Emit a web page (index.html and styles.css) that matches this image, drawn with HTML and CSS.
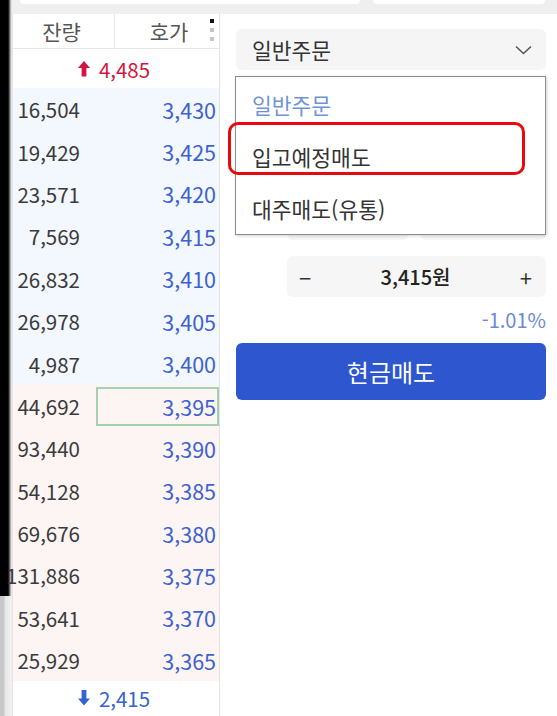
FILE: index.html
```html
<!DOCTYPE html>
<html lang="ko">
<head>
<meta charset="utf-8">
<title>호가 주문</title>
<link rel="stylesheet" href="styles.css">
</head>
<body>
<div class="screen">
  <div class="edge"><div class="edge-dark"></div><div class="edge-light"></div></div>
  <div class="main">
    <div class="topband"><div class="tb-box tb-a"></div><div class="tb-box tb-b"></div></div>
    <div class="content">
      <section class="book">
        <div class="book-head">
          <div class="hcell hcell-qty">잔량</div>
          <div class="hcell hcell-price">호가
            <span class="kebab"><i class="dot on"></i><i class="dot"></i><i class="dot"></i></span>
          </div>
        </div>
        <div class="total total-up">
          <svg class="arr" width="12" height="16" viewBox="0 0 12 16"><polygon points="6,0 12,7 8.4,7 8.4,15.5 3.6,15.5 3.6,7 0,7" fill="currentColor"/></svg>
          <span>4,485</span>
        </div>
        <div class="rows">
          <div class="row sell"><span class="qty">16,504</span><span class="price">3,430</span></div>
          <div class="row sell"><span class="qty">19,429</span><span class="price">3,425</span></div>
          <div class="row sell"><span class="qty">23,571</span><span class="price">3,420</span></div>
          <div class="row sell"><span class="qty">7,569</span><span class="price">3,415</span></div>
          <div class="row sell"><span class="qty">26,832</span><span class="price">3,410</span></div>
          <div class="row sell"><span class="qty">26,978</span><span class="price">3,405</span></div>
          <div class="row sell"><span class="qty">4,987</span><span class="price">3,400</span></div>
          <div class="row buy"><span class="qty">44,692</span><span class="price sel">3,395</span></div>
          <div class="row buy"><span class="qty">93,440</span><span class="price">3,390</span></div>
          <div class="row buy"><span class="qty">54,128</span><span class="price">3,385</span></div>
          <div class="row buy"><span class="qty">69,676</span><span class="price">3,380</span></div>
          <div class="row buy"><span class="qty">131,886</span><span class="price">3,375</span></div>
          <div class="row buy"><span class="qty">53,641</span><span class="price">3,370</span></div>
          <div class="row buy"><span class="qty">25,929</span><span class="price">3,365</span></div>
        </div>
        <div class="total total-down">
          <svg class="arr" width="12" height="16" viewBox="0 0 12 16"><polygon points="6,15.5 12,8.5 8.4,8.5 8.4,0 3.6,0 3.6,8.5 0,8.5" fill="currentColor"/></svg>
          <span>2,415</span>
        </div>
      </section>
      <section class="order">
        <div class="select-wrap">
          <div class="select">
            <span>일반주문</span>
            <svg class="chev" width="17" height="10" viewBox="0 0 17 10"><polyline points="1,1.5 8.5,8.5 16,1.5" fill="none" stroke="#555" stroke-width="1.6"/></svg>
          </div>
          <ul class="menu">
            <li class="opt opt-on">일반주문</li>
            <li class="opt">입고예정매도</li>
            <li class="opt">대주매도(유통)</li>
            <li class="mark"></li>
          </ul>
        </div>
        <div class="fields">
          <div class="pair"><div class="box"></div><div class="box"></div></div>
          <div class="pair"><div class="box"></div><div class="box"></div></div>
          <div class="pair"><div class="box"></div><div class="box"></div></div>
          <div class="stepper"><span class="step">−</span><span class="val">3,415원</span><span class="step">+</span></div>
        </div>
        <div class="rate">-1.01%</div>
        <button class="submit">현금매도</button>
      </section>
    </div>
  </div>
</div>
</body>
</html>
```
FILE: styles.css
```css
* { box-sizing: border-box; }
html, body { margin: 0; padding: 0; }
body {
  width: 557px;
  height: 716px;
  overflow: hidden;
  background: #fff;
  font-family: "Noto Sans CJK KR", "Noto Sans", sans-serif;
  color: #333;
}
.screen { display: flex; height: 716px; }
.edge { width: 12px; display: flex; flex-direction: column; }
.edge-dark {
  height: 596px;
  background: linear-gradient(to right, #000 0, #000 8px, #3a3a3a 9px, #8a8a8a 10px, #d8d8d8 11px, #ececec 12px);
}
.edge-light {
  flex: 1;
  background: linear-gradient(to right, #c8c8c8 0, #c8c8c8 4px, #e6e6e6 5px, #f2f2f2 11px, #e8e8e8 12px);
}
.main { flex: 1; display: flex; flex-direction: column; min-width: 0; }
.topband {
  height: 14px;
  background: #efefef;
  display: flex;
  gap: 13px;
  padding: 0 12px 0 8px;
}
.tb-box { height: 4px; background: #fff; border-radius: 0 0 5px 5px; }
.tb-a { width: 340px; }
.tb-b { flex: 1; }
.content { flex: 1; display: flex; }

/* order book */
.book {
  width: 208px;
  border-left: 1px solid #e6e6e6;
  border-right: 1px solid #e2e2e2;
  display: flex;
  flex-direction: column;
}
.book-head {
  height: 35px;
  display: grid;
  grid-template-columns: 102px 1fr;
  border-bottom: 1px solid #e6e6e6;
}
.hcell {
  display: flex;
  align-items: center;
  justify-content: center;
  font-size: 21px;
  color: #555;
}
.hcell-qty { border-right: 1px solid #e6e6e6; padding-right: 4px; }
.hcell-price { position: relative; padding-left: 4px; }
.kebab {
  position: absolute;
  right: 5px;
  top: 5px;
  display: flex;
  flex-direction: column;
  gap: 5px;
}
.dot { display: block; width: 4px; height: 4px; background: #c4c4c4; }
.dot.on { background: #111; }
.total {
  height: 39px;
  display: flex;
  align-items: center;
  justify-content: center;
  gap: 9px;
  font-size: 20.5px;
  padding-right: 4px;
}
.total-up { color: #d2163f; }
.total-down { height: 34px; color: #3462d0; }
.arr { display: block; }
.rows { display: flex; flex-direction: column; }
.row {
  height: 42.4px;
  display: grid;
  grid-template-columns: 83px 1fr;
  font-size: 20.5px;
}
.row.sell { background: #f3f7fe; }
.row.buy { background: #fdf4f4; }
.qty {
  display: flex;
  align-items: center;
  justify-content: flex-end;
  padding-right: 16px;
  color: #3a3a3a;
  white-space: nowrap;
}
.price {
  display: flex;
  align-items: center;
  justify-content: flex-end;
  padding-right: 3px;
  color: #3c62cf;
  font-size: 21.5px;
}
.price.sel {
  border: 2px solid #a4d1b2;
  margin: 2px 0 1px 0;
  padding-right: 1px;
}

/* order panel */
.order {
  flex: 1;
  padding: 15px 11px 0 16px;
  display: flex;
  flex-direction: column;
}
.select-wrap { position: relative; }
.select {
  height: 41px;
  background: #f5f5f5;
  border-radius: 6px;
  display: flex;
  align-items: center;
  justify-content: space-between;
  padding: 0 14px 0 16px;
  font-size: 21.5px;
  color: #333;
}
.chev { display: block; }
.menu {
  position: absolute;
  top: 47px;
  left: -1px;
  width: 311px;
  height: 159px;
  margin: 0;
  padding: 1px 0 0 0;
  list-style: none;
  background: #fff;
  border: 1px solid #8c8c8c;
  box-shadow: 1px 1px 3px rgba(0,0,0,0.18);
  z-index: 5;
}
.opt {
  height: 52px;
  display: flex;
  align-items: center;
  padding-left: 16px;
  font-size: 21.5px;
  color: #333;
}
.opt-on { color: #6f93d9; }
.mark {
  position: absolute;
  left: -8px;
  top: 45px;
  width: 297px;
  height: 53px;
  border: 3px solid #e8090f;
  border-radius: 10px;
}
.fields {
  margin-left: 51px;
  margin-top: 12px;
  display: flex;
  flex-direction: column;
  gap: 19px;
}
.pair { display: flex; gap: 12px; height: 40px; }
.box { flex: 1; background: #f5f5f5; border-radius: 6px; }
.pair .box:first-child { flex: 0 0 121px; }
.stepper {
  margin-top: -3px;
  height: 41px;
  background: #f6f6f6;
  border-radius: 6px;
  display: flex;
  align-items: center;
  justify-content: space-between;
  padding: 0 14px 0 12px;
  color: #222;
}
.step { font-size: 22px; color: #333; }
.val { font-size: 20px; font-weight: 500; }
.rate {
  margin-top: 13px;
  text-align: right;
  font-size: 20px;
  line-height: 20px;
  color: #6a8ad6;
}
.submit {
  margin-top: 13px;
  height: 57px;
  border: 0;
  border-radius: 6px;
  background: #2e56cf;
  color: #fff;
  font-family: inherit;
  font-size: 24px;
}
```
